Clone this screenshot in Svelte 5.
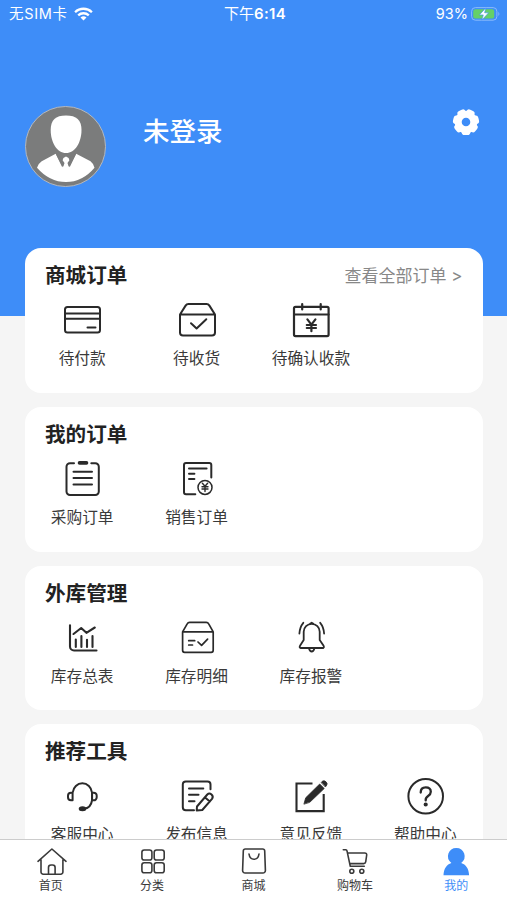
<script lang="ts">
  type Item = { label: string; icon: string; weight?: number };
  type Section = { title: string; more?: string; items: Item[] };

  const sections: Section[] = [
    {
      title: "商城订单",
      more: "查看全部订单 >",
      items: [
        {
          label: "待付款",
          icon: `<rect x="3" y="7" width="35" height="25.5" rx="2.5"/><path d="M3 13.6h35M3 18.8h35M25.5 27.5h8"/>`,
        },
        {
          label: "待收货",
          icon: `<path d="M3 14.5v18a3 3 0 0 0 3 3h29a3 3 0 0 0 3-3v-18zM3 14.5 8.6 5.6Q9.6 4 11.5 4h18q1.9 0 2.9 1.6L38 14.5M14 23.2l5.6 5.3 9.7-9.3"/>`,
        },
        {
          label: "待确认收款",
          weight: 2.2,
          icon: `<rect x="3" y="6.8" width="34.6" height="29.3" rx="1.5"/><path d="M3 14.5h34.6M11.2 4v5.5M29.7 4v5.5"/><path d="m16.4 19.4 4 5.2 4-5.2M15.8 25h9.2M15.8 28h9.200M20.4 24.6v6.6"/>`,
        },
      ],
    },
    {
      title: "我的订单",
      items: [
        {
          label: "采购订单",
          icon: `<path d="M12 4.2H8a3.5 3.5 0 0 0-3.5 3.5v24.8A3.5 3.5 0 0 0 8 36h25.3a3.5 3.5 0 0 0 3.5-3.5V7.7a3.5 3.5 0 0 0-3.5-3.5h-4M11.5 12.7H30M11.5 19H30M11.5 25.4H30"/><path d="M17.500 3.900h7" stroke-width="3.6"/>`,
        },
        {
          label: "销售订单",
          icon: `<path d="M18.3 35.2H9a2 2 0 0 1-2-2V6a2 2 0 0 1 2-2h23.300a2 2 0 0 1 2 2v12.5M12 9.600h17.600M12 14.7h5.4M12 20h5.4"/><circle cx="28" cy="28.4" r="7" stroke-width="1.5"/><path d="m25.4 24.3 2.6 3 2.6-3M25 27.7h6M25 30h6M28 27.3v5.2" stroke-width="1.4"/>`,
        },
      ],
    },
    {
      title: "外库管理",
      items: [
        {
          label: "库存总表",
          weight: 2.1,
          icon: `<path d="M8 7.2v21.3a4 4 0 0 0 4 4h22.5M11.5 16l7.7-6 5.2 4.8 8.4-5.3M13.8 21.5V29M19.4 18v11M25 21.800V29M30.5 18v11"/>`,
        },
        {
          label: "库存明细",
          weight: 1.7,
          icon: `<path d="M5.6 13.9v18.4a2 2 0 0 0 2 2h26.600a2 2 0 0 0 2-2V13.9zM5.6 13.9l4.6-8Q11 4.4 12.600 4.4h16.7q1.6 0 2.4 1.500l4.500 8M11.7 22.700h6M11.7 27h3.8M21 24l3.6 3.4 6-6.2"/>`,
        },
        {
          label: "库存报警",
          weight: 1.8,
          icon: `<path d="M9.5 30h22.8q1.2-.8.3-2.2L28.7 22v-8.2a8 8 0 0 0-16 0V22L9 27.800q-.8 1.500.5 2.200zM18 30.5q.8 3 2.7 3t2.7-3M19 5.700l1.700-1 1.700 1M12.300 4.800Q8.800 9 8.400 15.500M29.200 4.800q3.500 4.200 3.900 10.700"/>`,
        },
      ],
    },
    {
      title: "推荐工具",
      items: [
        {
          label: "客服中心",
          icon: `<path d="M10.7 16.500a9.700 10.200 0 0 1 19.300 0v8q-1.200 7.600-8 8.300M10.600 16.700H9a3 3 0 0 0-3 3v1.600a3 3 0 0 0 3 3h1.600zM30.100 16.700h1.600a3 3 0 0 1 3 3v1.600a3 3 0 0 1-3 3h-1.600z"/><ellipse cx="20.500" cy="32.700" rx="2.800" ry="1.500" fill="currentColor"/>`,
        },
        {
          label: "发布信息",
          icon: `<path d="M17 34.3H8.800a3 3 0 0 1-3-3V8.500a3 3 0 0 1 3-3h21.700a3 3 0 0 1 3 3v4.800M12 12.400h14.300M12 18.700h9.500M12 25.200h5.500"/><path d="m20 30.500 10.300-12q2-2 4.200 0t.5 4.400L25.300 34l-5.600.5zM27.800 21.300l5 4.200"/>`,
        },
        {
          label: "意见反馈",
          weight: 2.1,
          icon: `<path d="M21.500 7.500h-16v27.600h27.200V18" stroke-linecap="butt" stroke-linejoin="miter"/><path d="m13 27.800 1.700-6L28.700 8l4.500 4.500-14.200 13.600zM30.400 6.300l1.300-1.200q1.500-1 3.300.7t.8 3.200l-1.200 1.700z" fill="currentColor" stroke-width=".8"/>`,
        },
        {
          label: "帮助中心",
          icon: `<circle cx="20.700" cy="20.300" r="17.300"/><path d="M15.700 16.600q0-5.200 5-5.200t5.100 4.400q0 2.400-2.700 4.200t-2.400 4.300" stroke-width="2.300"/><circle cx="20.700" cy="28.500" r="1.100" fill="currentColor"/>`,
        },
      ],
    },
  ];

  const tabs: Item[] = [
    {
      label: "首页",
      icon: `<path d="M3 15.3 16.900 3 31 15.300M6 13.500V26a2.200 2.200 0 0 0 2.200 2.200h17.500a2.200 2.200 0 0 0 2.200-2.200V13.500M13.500 28v-6.500A2.500 2.500 0 0 1 16 19h1.600a2.500 2.500 0 0 1 2.500 2.500V28"/>`,
    },
    {
      label: "分类",
      icon: `<rect x="5.900" y="4" width="10" height="10" rx="2.300"/><rect x="18.200" y="4" width="10" height="10" rx="2.300"/><rect x="5.900" y="16.700" width="10" height="10" rx="2.300"/><rect x="18.200" y="16.700" width="10" height="10" rx="2.300"/>`,
    },
    {
      label: "商城",
      icon: `<path d="M8.300 3h17.400a2 2 0 0 1 2 1.900l.7 19.500a2.500 2.500 0 0 1-2.500 2.600H8.100a2.500 2.500 0 0 1-2.500-2.600l.7-19.500a2 2 0 0 1 2-1.900zM12 8q.8 5.300 5 5.300T22 8"/>`,
    },
    {
      label: "购物车",
      icon: `<path d="M4.300 3.800h2.500q1 0 1.200 1l3.300 15.500h14M8.500 7h17.300q2 0 1.900 2l-1 6.800q-.3 1.800-2 1.800H10.900"/><circle cx="12.800" cy="25.300" r="2"/><circle cx="22.800" cy="25.300" r="2"/>`,
    },
    {
      label: "我的",
      icon: `<path d="M16.300 1.900a8.300 8.300 0 0 1 4.900 15c4.600 1.400 7.700 5.600 7.900 12.400H3.500c.2-6.800 3.300-11 7.900-12.400a8.300 8.300 0 0 1 4.900-15z" fill="currentColor" stroke="none"/>`,
    },
  ];

  let active = "我的";

  const teeth = Array.from({ length: 7 }, (_, i) => 90 + (i * 360) / 7);
</script>

<div class="screen">
  <main>
    <header>
      <div class="status">
        <div class="carrier">
          <span>无SIM卡</span>
          <svg width="19" height="14" viewBox="0 0 19 14" fill="none" stroke="#fff" stroke-width="2.3">
            <path d="M1.1 5.2a12 12 0 0 1 16.8 0M4.2 8.400a7.6 7.6 0 0 1 10.6 0" />
            <path d="m9.5 13.6-3-3a4.4 4.4 0 0 1 6 0z" fill="#fff" stroke="none" />
          </svg>
        </div>
        <div class="time">下午<b>6:14</b></div>
        <div class="power">
          <span>93%</span>
          <svg width="30" height="14" viewBox="0 0 30 14">
            <rect x=".6" y=".6" width="25.3" height="12.6" rx="3.8" fill="none" stroke="#8abafb" stroke-width="1" />
            <rect x="2.2" y="2.2" width="21" height="9.4" rx="2.2" fill="#65d067" />
            <path d="M27.4 4.700q2 2.300 0 4.400z" fill="#8abafb" />
            <path d="M14.800.9 8.400 7.900h3.900l-1.400 5.200 6.700-7.300h-4z" fill="#fff" stroke="#3e8df8" stroke-width=".6" />
          </svg>
        </div>
      </div>
      <div class="profile">
        <svg class="avatar" viewBox="0 0 81 81">
          <circle cx="40.5" cy="40.5" r="40" fill="#7b7c7c" stroke="#b3b8bf" />
          <path d="M41 9.600c10.500 0 15.500 4.500 15.500 14.400 0 12.500-6.500 23-15.500 23S25.700 36.500 25.700 24c0-9.900 4.800-14.400 15.300-14.400z" fill="#fff" />
          <path d="M30.700 47.700 37.500 60.500h6.700l7-12.800 14.300 7.500q2.800 2 4 6.500Q57.500 76 41 76T12 61.700q1.500-4.500 4.700-6.500z" fill="#fff" />
          <path d="m30.700 47.700 6.500 13.500 2-4.400-2-4.200zM51.200 47.700l-6.500 13.500-2-4.400 2-4.200z" fill="#7b7c7c" />
          <path d="m38.400 52 2.600-1.500 2.600 1.500.8 2.300-1.900 2.800 1.900 6h-6.800l1.900-6-1.900-2.800z" fill="#fff" />
        </svg>
        <span class="name">未登录</span>
        <svg class="gear" viewBox="-14 -14 28 28" fill="none" stroke="#fff">
          <circle r="7.8" stroke-width="7" />
          {#each teeth as angle}
            <path d="M10.200-1.500v3" stroke-width="5.600" stroke-linecap="round" transform="rotate({angle})" />
          {/each}
        </svg>
      </div>
    </header>

    <div class="cards">
      {#each sections as section}
        <section>
          <div class="heading">
            <h2>{section.title}</h2>
            {#if section.more}
              <span class="more">{section.more}</span>
            {/if}
          </div>
          <div class="grid">
            {#each section.items as item}
              <div class="item">
                <svg viewBox="0 0 40 40" stroke-width={item.weight ?? 2}>{@html item.icon}</svg>
                <span>{item.label}</span>
              </div>
            {/each}
          </div>
        </section>
      {/each}
    </div>
  </main>

  <nav>
    {#each tabs as tab}
      <div class="tab" class:active={tab.label === active}>
        <svg viewBox="0 0 32 32" stroke-width="1.6">{@html tab.icon}</svg>
        <span>{tab.label}</span>
      </div>
    {/each}
  </nav>
</div>

<style>
  :global(body) {
    margin: 0;
    overflow: hidden;
  }

  .screen {
    display: flex;
    flex-direction: column;
    height: 900px;
    background: #f5f5f5;
    color: #3a3a3a;
    font-family: Inter, "Noto Sans CJK SC", sans-serif;
  }

  main {
    flex: 1;
    min-height: 0;
    overflow: hidden;
  }

  header {
    height: 316px;
    background: #3e8df8;
    color: #fff;
  }

  .status {
    display: grid;
    grid-template-columns: 1fr auto 1fr;
    align-items: center;
    height: 28px;
    padding: 0 6px 0 9px;
    font-size: 14.5px;
    line-height: 28px;
  }

  .carrier,
  .power {
    display: flex;
    align-items: center;
  }

  .carrier {
    gap: 6px;
    letter-spacing: 0.7px;
  }

  .power {
    justify-content: flex-end;
    gap: 3px;
  }

  .time {
    font-size: 15px;
  }

  .time b {
    font-weight: 600;
    letter-spacing: 0.3px;
  }

  .profile {
    display: flex;
    align-items: flex-start;
    padding: 77.5px 27px 0 25px;
  }

  .avatar {
    width: 81px;
    height: 81px;
  }

  .name {
    flex: 1;
    margin: 5px 0 0 37px;
    font-size: 26.5px;
    font-weight: 500;
    line-height: 40px;
  }

  .gear {
    width: 28px;
    height: 28px;
    margin-top: 2.5px;
  }

  .cards {
    display: flex;
    flex-direction: column;
    gap: 14px;
    margin: -68px 24.5px 0 25px;
  }

  section {
    flex: none;
    height: 144.8px;
    border-radius: 16px;
    background: #fff;
  }

  .heading {
    display: flex;
    justify-content: space-between;
    align-items: center;
    height: 52px;
    padding: 0 20px;
  }

  h2 {
    margin: 0;
    color: #222;
    font-size: 20.6px;
    font-weight: 600;
  }

  .more {
    color: #888;
    font-size: 17px;
  }

  .grid {
    display: grid;
    grid-template-columns: repeat(4, 1fr);
  }

  .item {
    display: flex;
    flex-direction: column;
    align-items: center;
    font-size: 15.7px;
    line-height: 24px;
    white-space: nowrap;
  }

  svg {
    display: block;
    flex: none;
  }

  .item svg,
  .tab svg {
    fill: none;
    stroke: currentColor;
    stroke-linecap: round;
    stroke-linejoin: round;
  }

  .item svg {
    width: 40px;
    height: 40px;
    margin-bottom: 7px;
    color: #2a2a2a;
  }

  nav {
    display: grid;
    grid-template-columns: repeat(5, 1fr);
    height: 60px;
    border-top: 1px solid #ccc;
    background: #fff;
  }

  .tab {
    display: flex;
    flex-direction: column;
    align-items: center;
    padding-top: 6px;
    font-size: 12px;
    line-height: 15px;
  }

  .tab svg {
    width: 32px;
    height: 32px;
  }

  .active {
    color: #3e8df8;
  }
</style>
